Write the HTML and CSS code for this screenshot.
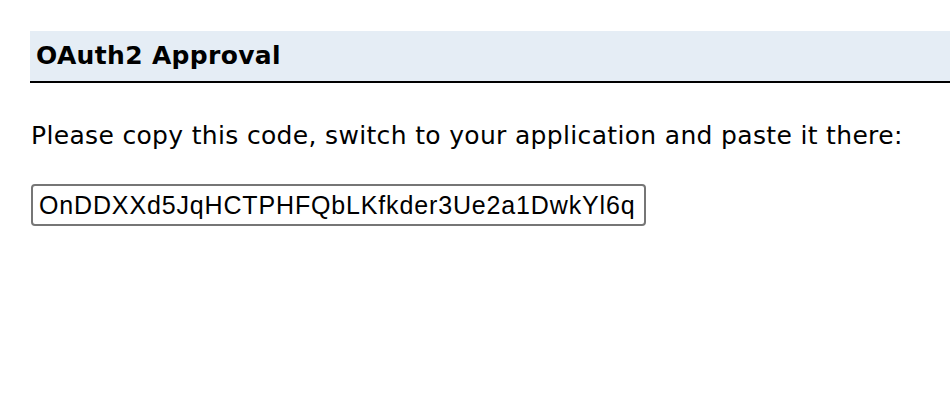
FILE: index.html
```html
<!DOCTYPE html>
<html>
<head>
<meta charset="utf-8">
<link rel="stylesheet" href="styles.css">
</head>
<body>
<div class="page">
  <h1 class="title">OAuth2 Approval</h1>
  <p class="msg">Please copy this code, switch to your application and paste it there:</p>
  <input class="code" type="text" value="OnDDXXd5JqHCTPHFQbLKfkder3Ue2a1DwkYl6q" readonly>
</div>
</body>
</html>
```
FILE: styles.css
```css
html, body {
  margin: 0;
  padding: 0;
  background: #fff;
}
.page {
  padding: 31px 0 0 30px;
  font-family: "DejaVu Sans", Verdana, sans-serif;
  color: #000;
}
.title {
  margin: 0;
  height: 50px;
  line-height: 50px;
  padding-left: 6px;
  font-size: 25px;
  letter-spacing: 0.33px;
  font-weight: bold;
  background: #e5edf5;
  border-bottom: 2px solid #000;
}
.msg {
  margin: 38px 0 0 1px;
  font-size: 25px;
  letter-spacing: 0.33px;
  line-height: 30px;
}
.code {
  display: block;
  margin: 33px 0 0 1px;
  box-sizing: border-box;
  width: 615px;
  height: 42px;
  padding: 0 4px 0 6px;
  font-family: "Liberation Sans", Arial, sans-serif;
  font-size: 25px;
  letter-spacing: 0.85px;
  color: #000;
  border: 2px solid #767676;
  border-radius: 4px;
  background: #fff;
  outline: none;
}
```
